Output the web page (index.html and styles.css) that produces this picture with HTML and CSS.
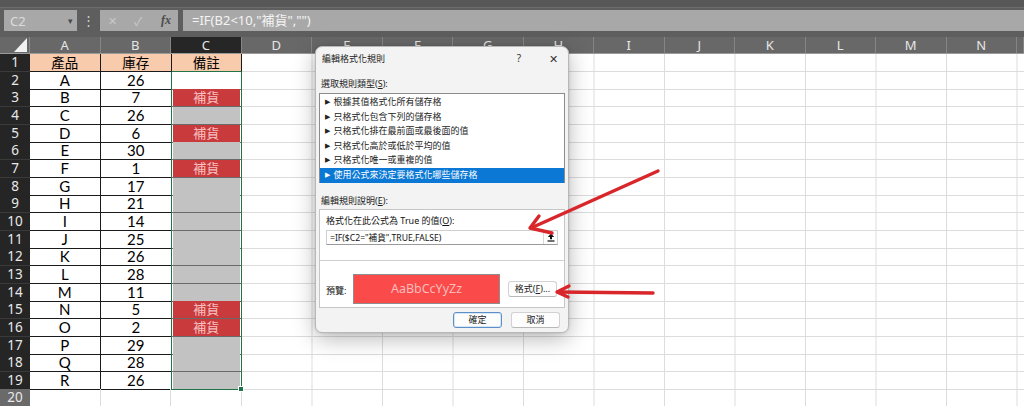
FILE: index.html
```html
<!DOCTYPE html>
<html>
<head>
<meta charset="utf-8">
<link rel="stylesheet" href="styles.css">
</head>
<body>
<div class="topstrip"></div>
<div class="fbar">
  <div class="namebox"><span class="nb-text">C2</span><span class="nb-arrow">▾</span></div>
  <div class="vdots">⋮</div>
  <div class="fxbox">
    <span class="fx-x">✕</span><span class="fx-ok">✓</span><span class="fx-fx">fx</span>
  </div>
  <div class="formula">=IF(B2&lt;10,"補貨","")</div>
</div>

<div class="colhead">
  <div class="corner"></div>
  <div class="ch">A</div><div class="ch">B</div><div class="ch sel">C</div>
  <div class="ch">D</div><div class="ch">E</div><div class="ch">F</div><div class="ch">G</div>
  <div class="ch">H</div><div class="ch">I</div><div class="ch">J</div><div class="ch">K</div>
  <div class="ch">L</div><div class="ch">M</div><div class="ch">N</div><div class="ch"></div>
</div>

<div class="sheet">
  <div class="row"><div class="rh">1</div><div class="c hd">產品</div><div class="c hd b">庫存</div><div class="c hd cc top">備註</div><div class="rest"></div></div>
  <div class="row"><div class="rh">2</div><div class="c">A</div><div class="c b">26</div><div class="c cc w"></div><div class="rest"></div></div>
  <div class="row"><div class="rh">3</div><div class="c">B</div><div class="c b">7</div><div class="c cc r">補貨</div><div class="rest"></div></div>
  <div class="row"><div class="rh">4</div><div class="c">C</div><div class="c b">26</div><div class="c cc g"></div><div class="rest"></div></div>
  <div class="row"><div class="rh">5</div><div class="c">D</div><div class="c b">6</div><div class="c cc r">補貨</div><div class="rest"></div></div>
  <div class="row"><div class="rh">6</div><div class="c">E</div><div class="c b">30</div><div class="c cc g"></div><div class="rest"></div></div>
  <div class="row"><div class="rh">7</div><div class="c">F</div><div class="c b">1</div><div class="c cc r">補貨</div><div class="rest"></div></div>
  <div class="row"><div class="rh">8</div><div class="c">G</div><div class="c b">17</div><div class="c cc g"></div><div class="rest"></div></div>
  <div class="row"><div class="rh">9</div><div class="c">H</div><div class="c b">21</div><div class="c cc g"></div><div class="rest"></div></div>
  <div class="row"><div class="rh">10</div><div class="c">I</div><div class="c b">14</div><div class="c cc g"></div><div class="rest"></div></div>
  <div class="row"><div class="rh">11</div><div class="c">J</div><div class="c b">25</div><div class="c cc g"></div><div class="rest"></div></div>
  <div class="row"><div class="rh">12</div><div class="c">K</div><div class="c b">26</div><div class="c cc g"></div><div class="rest"></div></div>
  <div class="row"><div class="rh">13</div><div class="c">L</div><div class="c b">28</div><div class="c cc g"></div><div class="rest"></div></div>
  <div class="row"><div class="rh">14</div><div class="c">M</div><div class="c b">11</div><div class="c cc g"></div><div class="rest"></div></div>
  <div class="row"><div class="rh">15</div><div class="c">N</div><div class="c b">5</div><div class="c cc r">補貨</div><div class="rest"></div></div>
  <div class="row"><div class="rh">16</div><div class="c">O</div><div class="c b">2</div><div class="c cc r">補貨</div><div class="rest"></div></div>
  <div class="row"><div class="rh">17</div><div class="c">P</div><div class="c b">29</div><div class="c cc g"></div><div class="rest"></div></div>
  <div class="row"><div class="rh">18</div><div class="c">Q</div><div class="c b">28</div><div class="c cc g"></div><div class="rest"></div></div>
  <div class="row"><div class="rh">19</div><div class="c">R</div><div class="c b">26</div><div class="c cc g last"></div><div class="rest"></div></div>
  <div class="row"><div class="rh dim">20</div><div class="c e"></div><div class="c e"></div><div class="c e"></div><div class="rest"></div></div>
</div>

<div class="dialog">
  <div class="dtitle">
    <span>編輯格式化規則</span>
    <span class="dctrls"><span class="help">?</span><span class="close">✕</span></span>
  </div>
  <div class="dbody">
    <div class="lbl lbl1">選取規則類型(<u>S</u>):</div>
    <div class="listbox">
      <div class="item"><span class="tri">▶</span>根據其值格式化所有儲存格</div>
      <div class="item"><span class="tri">▶</span>只格式化包含下列的儲存格</div>
      <div class="item"><span class="tri">▶</span>只格式化排在最前面或最後面的值</div>
      <div class="item"><span class="tri">▶</span>只格式化高於或低於平均的值</div>
      <div class="item"><span class="tri">▶</span>只格式化唯一或重複的值</div>
      <div class="item selitem"><span class="tri">▶</span>使用公式來決定要格式化哪些儲存格</div>
    </div>
    <div class="lbl lbl2">編輯規則說明(<u>E</u>):</div>
    <div class="box">
      <div class="boxtop">
        <div class="flabel">格式化在此公式為 True 的值(<u>O</u>):</div>
        <div class="finput">
          <span class="ftext">=IF($C2="補貨",TRUE,FALSE)</span>
          <span class="fbtn"><svg width="8" height="9" viewBox="0 0 8 9"><path d="M4 0.5 L7.2 4 L5 4 L5 6.2 L3 6.2 L3 4 L0.8 4 Z" fill="#111"/><rect x="0.5" y="7.4" width="7" height="1.2" fill="#111"/></svg></span>
        </div>
      </div>
      <div class="boxbot">
        <span class="plabel">預覽:</span>
        <div class="preview">AaBbCcYyZz</div>
        <div class="btn fmt">格式(<u>F</u>)...</div>
      </div>
    </div>
    <div class="btnrow">
      <div class="btn ok">確定</div>
      <div class="btn">取消</div>
    </div>
  </div>
</div>

<svg class="arrows" width="1024" height="406" viewBox="0 0 1024 406">
  <g fill="none" stroke="#d8262a" stroke-width="3.4" stroke-linecap="round" stroke-linejoin="round">
    <path d="M658 171 L531 228"/>
    <path d="M539 216 L530 228 L552 233"/>
    <path d="M653 293 L558 292"/>
    <path d="M569 286 L557 292 L568 297"/>
  </g>
</svg>
</body>
</html>
```
FILE: styles.css
```css
* { box-sizing: border-box; margin: 0; padding: 0; }
html, body { width: 1024px; height: 406px; overflow: hidden; }
body {
  position: relative;
  background: #ffffff;
  font-family: "Noto Sans", "Noto Sans CJK TC", sans-serif;
  color: #000;
}

/* ---------- formula bar ---------- */
.topstrip { height: 8px; background: #575757; border-bottom: 1px solid #6c6c6c; }
.fbar {
  height: 29px;
  background: #5e5e5e;
  display: flex;
  align-items: flex-start;
  padding: 2px 0 0 4px;
}
.namebox {
  width: 73px; height: 21px;
  background: #a8a8a8;
  display: flex; align-items: center; justify-content: space-between;
  padding: 0 4px 0 6px;
}
.nb-text { font-size: 13px; color: #dcdcdc; }
.nb-arrow { font-size: 9px; color: #4a4a4a; }
.vdots { width: 23px; height: 21px; text-align: center; font-size: 13px; line-height: 21px; color: #d0d0d0; }
.fxbox {
  width: 78px; height: 21px;
  background: #a8a8a8;
  display: flex; align-items: center;
  padding-left: 8px;
}
.fx-x { font-size: 11px; color: #c8c8c8; width: 26px; }
.fx-ok { font-size: 12px; color: #c8c8c8; width: 27px; }
.fx-fx { font-family: "Liberation Serif", serif; font-style: italic; font-weight: bold; font-size: 12px; color: #4a4a4a; }
.formula {
  flex: 1; height: 21px; margin-left: 5px;
  background: #a8a8a8;
  font-size: 13px; line-height: 21px; color: #f4f4f4;
  padding-left: 9px;
}

/* ---------- column headers ---------- */
.colhead {
  display: grid;
  grid-template-columns: 30px repeat(14, 70.5px) 1fr;
  height: 17px;
  background: #686868;
  border-bottom: 1px solid #9a9a9a;
}
.corner { position: relative; background: #686868; border-right: 1px solid #888; }
.corner::after {
  content: ""; position: absolute; right: 2px; bottom: 1px;
  width: 13px; height: 14px; background: #f2f2f2;
  clip-path: polygon(100% 0, 100% 100%, 0 100%);
}
.ch {
  border-right: 1px solid #858585;
  color: #e6e6e6; font-size: 13px; line-height: 16px; text-align: center;
}
.ch.sel { background: #262626; }

/* ---------- sheet ---------- */
.sheet { display: flex; flex-direction: column; }
.row {
  display: grid;
  grid-template-columns: 30px 70.5px 70.5px 70.5px 1fr;
  height: 17.67px;
}
.rh {
  background: #252525; color: #e8e8e8;
  font-size: 13.5px; line-height: 17px; text-align: center;
  border-bottom: 1px solid #3a3a3a;
}
.rh.dim { background: #6a6a6a; color: #e8e8e8; border-bottom: none; }
.c {
  border-right: 1px solid #1a1a1a;
  border-bottom: 1px solid #1a1a1a;
  font-family: "Lato", "Noto Sans CJK TC", sans-serif;
  font-size: 15px; line-height: 17px; text-align: center;
}
.c.b { border-right: none; }
.c.hd { background: #f8cbad; font-family: "Noto Sans CJK TC", sans-serif; font-size: 13.5px; line-height: 17px; }
.c.e { border-color: #dcdcdc; border-right: 1px solid #dcdcdc; border-bottom: none; }
.cc {
  border-left: 1px solid #21734a;
  border-right: 1px solid #21734a;
  border-bottom: 1px solid #6a6a6a;
  padding: 0 1px 0 1px;
  background-clip: content-box;
}
.cc.top { border-color: #1a1a1a; border-bottom-color: #21734a; background-clip: border-box; padding: 0; }
.cc.w { background: #fff; border-bottom-color: #777; }
.cc.g { background-color: #c2c2c2; }
.cc.r {
  background-color: #c93a3c;
  color: #f7c0c0;
  font-family: "Noto Sans CJK TC", sans-serif;
  font-size: 13px; line-height: 16px;
}
.cc.last { border-bottom: 1px solid #21734a; position: relative; }
.cc.last::after {
  content: ""; position: absolute; right: -3px; bottom: -3px;
  width: 4px; height: 4px; background: #21734a; border: 1px solid #fff;
}
.rest {
  border-bottom: 1px solid #dcdcdc;
  background-image: linear-gradient(to left, #dcdcdc 1px, transparent 1px);
  background-size: 70.5px 100%;
  background-repeat: repeat-x;
}

/* ---------- dialog ---------- */
.dialog {
  position: absolute; left: 315px; top: 46px;
  width: 254px; height: 287px;
  background: #f3f3f3;
  border: 1px solid #b8b8b8;
  border-radius: 7px;
  box-shadow: 0 6px 22px rgba(0,0,0,0.28), 0 0 3px rgba(0,0,0,0.15);
  font-size: 9px; color: #222;
}
.dtitle {
  height: 22px;
  display: flex; justify-content: space-between; align-items: center;
  padding: 0 10px 0 6px;
  font-size: 9px; color: #222;
}
.dctrls { display: flex; align-items: center; }
.help { font-size: 10px; color: #333; margin-right: 28px; }
.close { font-size: 11px; color: #333; }
.dbody { padding: 0 3px 0 3px; }
.lbl { height: 14px; line-height: 14px; padding-left: 2px; }
.lbl1 { margin-top: 8px; }
.lbl2 { margin-top: 11px; }
.listbox {
  margin-top: 2px; height: 90px;
  background: #fff;
  border: 1px solid #8c8c8c;
  padding-top: 1px;
}
.item {
  height: 14.6px; line-height: 14.6px;
  padding-left: 5px;
  font-size: 9px; color: #222;
  white-space: nowrap;
}
.tri { font-family: "DejaVu Sans", sans-serif; font-size: 7px; margin-right: 3px; vertical-align: 1px; }
.selitem { background: #0a78d4; color: #fff; }
.box {
  margin-top: 1px; height: 99px;
  background: #fff;
  border: 1px solid #c6c6c6;
}
.boxtop { height: 51px; border-bottom: 1px solid #cfcfcf; padding: 4px 6px 0 6px; }
.flabel { height: 14px; line-height: 14px; color: #111; font-size: 9px; }
.finput {
  margin-top: 2px; height: 15px;
  border: 1px solid #cfcfcf; border-bottom-color: #9a9a9a;
  display: flex; align-items: center; justify-content: space-between;
  padding-left: 3px;
}
.ftext { font-size: 8.6px; color: #111; white-space: nowrap; }
.fbtn {
  width: 14px; height: 13px;
  border-left: 1px solid #d8d8d8;
  display: flex; align-items: center; justify-content: center;
}
.boxbot {
  display: flex; align-items: center;
  padding: 13px 0 0 6px;
}
.plabel { width: 27px; font-size: 9px; color: #111; margin-top: 3px; }
.preview {
  width: 147px; height: 30px;
  background: #fb4a4a;
  border: 1px solid #8e8e8e;
  color: #f8bcbc;
  font-size: 12.5px; line-height: 28px; text-align: center;
}
.btn {
  width: 49px; height: 16px;
  background: #fdfdfd;
  border: 1px solid #d2d2d2; border-bottom-color: #b8b8b8;
  border-radius: 3px;
  font-size: 9px; line-height: 14px; text-align: center; color: #222;
}
.btn.fmt { margin-left: 8px; }
.btnrow {
  display: flex; justify-content: flex-end; gap: 9px;
  margin-top: 4px; padding-right: 5px;
}
.btn.ok { border: 1px solid #5a8fc8; box-shadow: inset 0 0 0 1px #d7e6f5; }

/* ---------- annotation arrows ---------- */
.arrows { position: absolute; left: 0; top: 0; pointer-events: none; }
```
